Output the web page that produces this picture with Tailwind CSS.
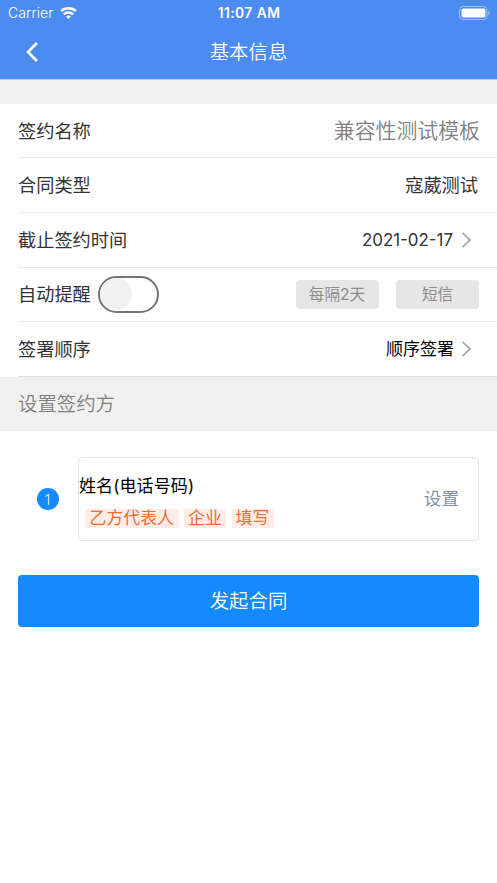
<!DOCTYPE html>
<html lang="zh-CN">
<head>
<meta charset="utf-8">
<title>基本信息</title>
<script src="https://cdn.jsdelivr.net/npm/@tailwindcss/browser@4"></script>
</head>
<body class="w-[497px] h-[883px] overflow-hidden bg-white text-[#333] font-['Inter','Noto_Sans_CJK_SC',sans-serif]">
<header class="h-[79px] bg-[#4c8bef] text-white">
  <div class="h-[26px] grid grid-cols-3 items-center pl-[8px] pr-[7px]">
    <div class="flex items-center gap-[6px]">
      <span class="text-[14px] leading-[26px] font-['Inter'] font-light tracking-[0.12px]">Carrier</span>
      <svg class="w-[17px] h-[12px]" viewBox="0 0 17 12" fill="none" stroke="white" stroke-width="2.5">
        <path d="M1 4.2C5.2 .3 11.8 .3 16 4.2"/>
        <path d="M3.8 7.3C6.4 4.8 10.6 4.8 13.2 7.3"/>
        <path d="M8.5 12L6 9.5C7.4 8.2 9.6 8.2 11 9.5Z" fill="white" stroke="none"/>
      </svg>
    </div>
    <span class="text-center text-[13.8px] leading-[26px] font-semibold tracking-[0.45px] whitespace-pre">11:07 AM</span>
    <svg class="justify-self-end w-[31px] h-[14px]" viewBox="0 0 31 14">
      <rect x=".5" y=".5" width="27.5" height="13" rx="3.6" fill="none" stroke="white" stroke-opacity=".45"/>
      <rect x="2.5" y="2.5" width="24" height="9" rx="1.8" fill="white"/>
      <path d="M29.3 4.8C31.2 5.5 31.2 8.5 29.3 9.2Z" fill="white" fill-opacity=".5"/>
    </svg>
  </div>
  <div class="h-[52px] grid grid-cols-[1fr_auto_1fr] items-center">
    <svg class="ml-[26px] w-[12px] h-[20px]" viewBox="0 0 12 20" fill="none" stroke="white" stroke-width="2.6"><path d="M10.9 1L2 10L10.9 19"/></svg>
    <h1 class="text-[19.4px] leading-[28px] font-[350]">基本信息</h1>
    <span></span>
  </div>
</header>
<div class="h-[24.5px] border-t border-[#b8cff3] bg-[#f0f0f0]"></div>
<main>
  <section class="pl-[18px] h-[273.5px] grid grid-rows-5 text-[18.2px] leading-[28px]">
    <div class="flex items-center justify-between pr-[17px] pt-px border-b border-[#e6e6e6]">
      <span>签约名称</span><span class="text-[20.9px] leading-[28px] text-[#808080] font-[350]">兼容性测试模板</span>
    </div>
    <div class="flex items-center justify-between pr-[19px] border-b border-[#ececec]">
      <span>合同类型</span><span>寇葳测试</span>
    </div>
    <div class="flex items-center pr-[25px] border-b border-[#e6e6e6]">
      <span class="flex-1">截止签约时间</span><span class="text-[16.9px]">2021-02-17</span>
      <svg class="ml-[8px] w-[11px] h-[16px]" viewBox="0 0 11 16" fill="none" stroke="#aaa" stroke-width="1.8"><path d="M1.5 .8L9 8L1.5 15.2"/></svg>
    </div>
    <div class="flex items-center pr-[18px] border-b border-[#ececec]">
      <span>自动提醒</span>
      <span class="ml-[7px] w-[61px] h-[37px] rounded-full border-2 border-[#747474] flex items-center"><i class="block w-[32px] h-[32px] rounded-full bg-[#f1f1f1]"></i></span>
      <span class="ml-auto w-[83px] h-[29px] rounded-[4px] bg-[#e6e6e6] text-[#8b8b8b] text-[15.6px] leading-[29px] text-center">每隔2天</span>
      <span class="ml-[17.5px] w-[83px] h-[29px] rounded-[4px] bg-[#e6e6e6] text-[#8b8b8b] text-[15.6px] leading-[29px] text-center">短信</span>
    </div>
    <div class="flex items-center pr-[25px] border-b border-[#dcdcdc]">
      <span class="flex-1">签署顺序</span><span class="text-[17px] text-black">顺序签署</span>
      <svg class="ml-[7px] w-[11px] h-[16px]" viewBox="0 0 11 16" fill="none" stroke="#aaa" stroke-width="1.8"><path d="M1.5 .8L9 8L1.5 15.2"/></svg>
    </div>
  </section>
  <h2 class="h-[54px] pl-[18px] bg-[#f0f0f0] text-[19.4px] leading-[55px] text-[#808080] font-[350]">设置签约方</h2>
  <section class="mt-[26px] mx-[18px] flex items-center">
    <span class="ml-[19px] w-[22px] h-[22px] rounded-full bg-[#148aff] text-white text-[15px] leading-[22px] text-center font-['Noto_Sans'] font-light">1</span>
    <div class="ml-[19px] w-[401px] h-[84px] rounded-[4px] border border-[#e6e6e6] flex items-center justify-between pr-[19px]">
      <div class="pt-[2px]">
        <div class="text-[17px] leading-[28px] text-black tracking-[0.1px]">姓名(电话号码)</div>
        <div class="mt-[9px] ml-[6px] flex gap-[5.5px] text-[16.9px] leading-[19px] text-[#f36c33]">
          <span class="w-[93.5px] bg-[#feece6] text-center">乙方代表人</span>
          <span class="w-[42px] bg-[#feece6] text-center">企业</span>
          <span class="w-[42px] bg-[#feece6] text-center">填写</span>
        </div>
      </div>
      <span class="pt-px text-[17.6px] text-[#8592a3]">设置</span>
    </div>
  </section>
  <button class="block mt-[34px] ml-[18px] w-[461px] h-[52px] rounded-[4px] bg-[#148aff] text-white text-[19.4px] leading-[53px] font-[350]">发起合同</button>
</main>
</body>
</html>
